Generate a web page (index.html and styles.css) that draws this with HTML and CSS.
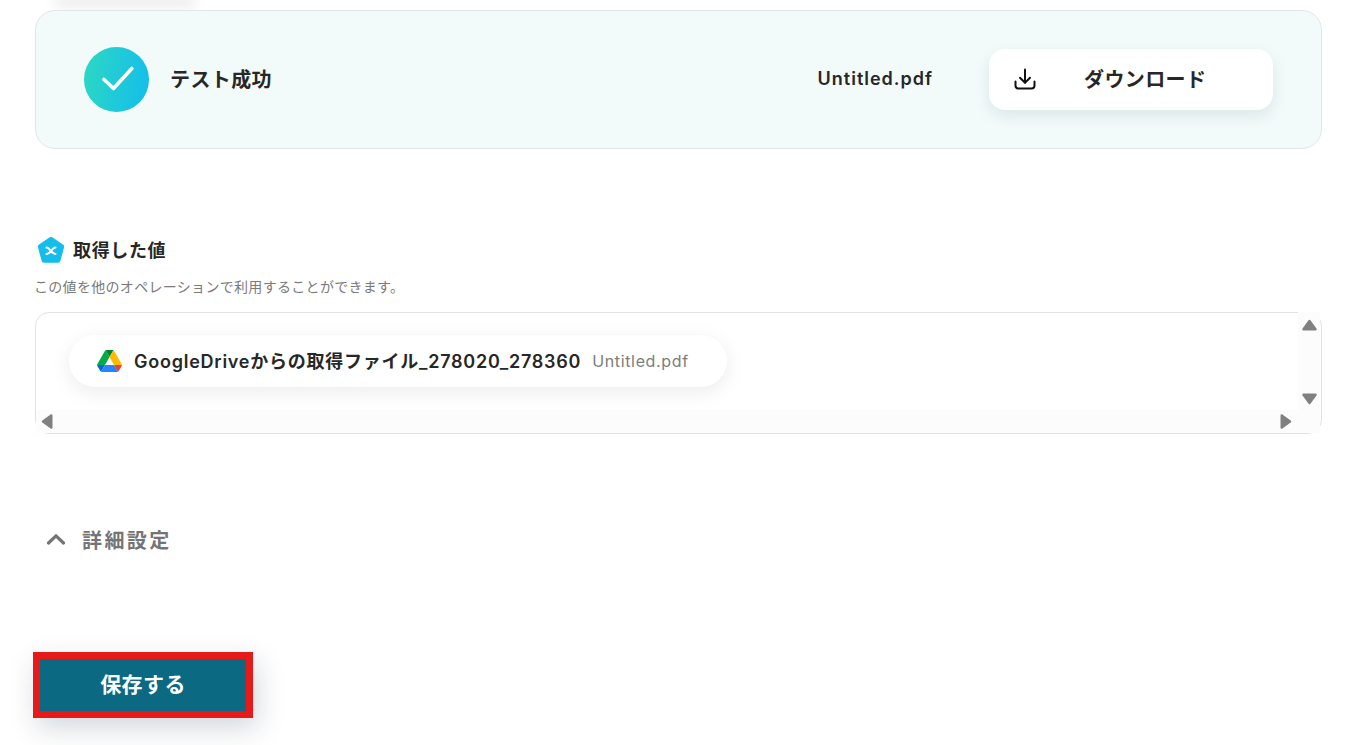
FILE: index.html
```html
<!DOCTYPE html>
<html lang="ja">
<head>
<meta charset="utf-8">
<title>テスト成功</title>
<link rel="stylesheet" href="styles.css">
</head>
<body>
<main class="page">
  <div class="stub"></div>
  <section class="result">
    <div class="check">
      <svg class="check-mark" width="32" height="26" viewBox="0 0 32 26" fill="none"><path d="M2 13.5 L11.5 22.5 L29.8 2.5" stroke="#fff" stroke-width="3.6" stroke-linecap="round" stroke-linejoin="round"/></svg>
    </div>
    <div class="result-title">テスト成功</div>
    <div class="file-name">Untitled.pdf</div>
    <button class="download">
      <svg class="dl-icon" width="24" height="24" viewBox="0 0 24 24" fill="none" stroke="#111" stroke-width="2" stroke-linecap="round" stroke-linejoin="round"><path d="M2.5 14.5v4a3 3 0 0 0 3 3h13a3 3 0 0 0 3-3v-4"/><path d="M12 2.5V15.5"/><path d="M7 10.8l5 5 5-5"/></svg>
      <span class="dl-label">ダウンロード</span>
    </button>
  </section>

  <h2 class="values-head">
    <svg class="pentagon" width="28" height="28" viewBox="0 0 28 28"><path d="M14 3 L25 10.500 L21.200 24.500 H6.800 L3 10.500 Z" fill="#14bdeb" stroke="#14bdeb" stroke-width="4.4" stroke-linejoin="round"/><path d="M9.500 11.500c3.500 0 5 6.500 9 6.500M9.500 18c4 0 5.500-6.500 9-6.500" stroke="#fff" stroke-width="2" stroke-linecap="round" fill="none"/></svg>
    <span>取得した値</span>
  </h2>
  <p class="values-note">この値を他のオペレーションで利用することができます。</p>

  <div class="values-box">
    <div class="pill">
      <svg class="drive" width="25" height="22" viewBox="0 0 87.3 78">
        <path d="m6.6 66.85 3.85 6.65c.8 1.4 1.95 2.5 3.3 3.3l13.75-23.8h-27.5c0 1.55.4 3.1 1.2 4.5z" fill="#0066da"/>
        <path d="m43.65 25-13.75-23.8c-1.35.8-2.5 1.9-3.3 3.3l-25.4 44a9.06 9.06 0 0 0 -1.2 4.5h27.5z" fill="#00ac47"/>
        <path d="m73.55 76.8c1.35-.8 2.5-1.9 3.3-3.3l1.6-2.75 7.65-13.25c.8-1.4 1.2-2.95 1.2-4.5h-27.502l5.852 11.5z" fill="#ea4335"/>
        <path d="m43.65 25 13.75-23.8c-1.35-.8-2.9-1.2-4.5-1.2h-18.5c-1.6 0-3.15.45-4.5 1.2z" fill="#00832d"/>
        <path d="m59.8 53h-32.3l-13.75 23.8c1.35.8 2.9 1.2 4.5 1.2h50.8c1.6 0 3.15-.45 4.5-1.2z" fill="#2684fc"/>
        <path d="m73.4 26.5-12.7-22c-.8-1.4-1.95-2.5-3.3-3.3l-13.75 23.8 16.15 28h27.45c0-1.55-.4-3.1-1.2-4.5z" fill="#ffba00"/>
      </svg>
      <span class="pill-name">GoogleDriveからの取得ファイル_278020_278360</span>
      <span class="pill-value">Untitled.pdf</span>
    </div>
    <div class="bar-right">
      <svg class="arrow arrow-up" width="15" height="12" viewBox="0 0 15 12"><path d="M7.5 2 L13.500 10.300 H1.500 Z" fill="#808080" stroke="#808080" stroke-width="2.400" stroke-linejoin="round"/></svg>
      <svg class="arrow arrow-down" width="15" height="12" viewBox="0 0 15 12"><path d="M7.500 10 L13.500 1.700 H1.500 Z" fill="#808080" stroke="#808080" stroke-width="2.400" stroke-linejoin="round"/></svg>
    </div>
    <div class="bar-bottom">
      <svg class="arrow arrow-left" width="12" height="15" viewBox="0 0 12 15"><path d="M2 7.500 L10.300 13.500 V1.500 Z" fill="#808080" stroke="#808080" stroke-width="2.400" stroke-linejoin="round"/></svg>
      <svg class="arrow arrow-right" width="12" height="15" viewBox="0 0 12 15"><path d="M10 7.500 L1.700 13.500 V1.500 Z" fill="#808080" stroke="#808080" stroke-width="2.400" stroke-linejoin="round"/></svg>
    </div>
  </div>

  <div class="details">
    <svg class="chevron" width="20" height="12" viewBox="0 0 20 12" fill="none"><path d="M2.500 10 L10 2.800 L17.500 10" stroke="#757575" stroke-width="3.200" stroke-linecap="round" stroke-linejoin="round"/></svg>
    <span>詳細設定</span>
  </div>

  <button class="save">保存する</button>
</main>
</body>
</html>
```

FILE: styles.css
```css
* { box-sizing: border-box; }

html, body {
  margin: 0;
  height: 745px;
  overflow: hidden;
  background: #fff;
}

body {
  font-family: Inter, "Noto Sans CJK JP", "Noto Sans", sans-serif;
  color: #272727;
}

.page {
  padding-left: 35px;
  width: 1322px;
}

.stub {
  height: 1px;
  width: 130px;
  margin: -1px 0 0 25px;
  box-shadow: 0 2px 14px 5px rgba(0, 0, 0, 0.09);
}

.result {
  margin-top: 10px;
  height: 139px;
  display: flex;
  align-items: center;
  padding: 0 48px;
  background: #f2fafa;
  border: 1px solid #e2e6e8;
  border-radius: 20px;
  position: relative;
}

.check {
  width: 65px;
  height: 65px;
  margin-top: -1px;
  border-radius: 50%;
  background: linear-gradient(100deg, #2dd8c3, #13bdec);
  display: flex;
  align-items: center;
  justify-content: center;
  flex: none;
}

.check-mark { margin: 0 0 0 2px; }

.result-title {
  margin: -3px 0 0 21px;
  font-size: 20px;
  font-weight: 600;
  letter-spacing: 0.02em;
  flex: 1;
}

.file-name {
  margin: -3px 56px 0 0;
  font-size: 18px;
  font-weight: 600;
  letter-spacing: 0.055em;
}

.download {
  width: 284px;
  height: 61px;
  margin: -1px 0 0 0;
  padding: 0 24px;
  display: flex;
  align-items: center;
  border: 0;
  border-radius: 16px;
  background: #fff;
  box-shadow: 0 6px 16px rgba(0, 40, 50, 0.09);
  font: inherit;
  color: inherit;
}

.dl-icon { flex: none; }

.dl-label {
  margin: -2px 0 0 47px;
  font-size: 20px;
  font-weight: 600;
  letter-spacing: 0.02em;
}

.values-head {
  margin: 86px 0 0 2px;
  height: 28px;
  display: flex;
  align-items: center;
  gap: 8px;
  font-size: 18px;
  font-weight: 600;
  letter-spacing: 0.035em;
  color: #272727;
}

.pentagon {
  flex: none;
  margin-top: 2px;
}

.values-note {
  margin: 13px 0 0 -1px;
  height: 22px;
  font-size: 14px;
  line-height: 22px;
  letter-spacing: 0.022em;
  color: #7a7a7a;
}

.values-box {
  margin-top: 14px;
  height: 122px;
  position: relative;
  border: 1px solid #e3e3e3;
  border-radius: 14px;
  padding: 22px 0 0 33px;
}

.pill {
  width: 658px;
  height: 52px;
  display: flex;
  align-items: center;
  padding-left: 28px;
  border-radius: 26px;
  background: #fff;
  box-shadow: 0 5px 20px rgba(0, 0, 0, 0.08);
}

.drive { flex: none; }

.pill-name {
  margin: -2px 0 0 12px;
  font-size: 18px;
  font-weight: 600;
  letter-spacing: 0.042em;
  white-space: nowrap;
}

.pill-value {
  margin-left: 11px;
  font-size: 16px;
  color: #7d7d7d;
  letter-spacing: 0.04em;
  white-space: nowrap;
}

.bar-right {
  position: absolute;
  top: -1px;
  right: 1px;
  width: 22px;
  bottom: 0;
  background: #fcfcfc;
}

.bar-bottom {
  position: absolute;
  left: 0;
  right: 1px;
  bottom: 0;
  height: 23px;
  background: #fcfcfc;
}

.arrow {
  position: absolute;
}

.arrow-up {
  top: 7px;
  left: 4px;
}

.arrow-down {
  top: 81px;
  left: 4px;
}

.arrow-left {
  top: 4px;
  left: 5px;
}

.arrow-right {
  top: 4px;
  right: 28px;
}

.details {
  margin: 91px 0 0 11px;
  height: 28px;
  display: flex;
  align-items: center;
  gap: 16px;
  font-size: 20px;
  font-weight: 600;
  letter-spacing: 0.12em;
  color: #757575;
}

.chevron { flex: none; }

.save {
  display: block;
  margin: 99px 0 0 -2px;
  width: 220px;
  height: 66px;
  padding: 0 0 4px;
  border: 7px solid #e71a1a;
  background: #0b6982;
  color: #fff;
  font: inherit;
  font-size: 21px;
  font-weight: 600;
  letter-spacing: 0.02em;
  box-shadow: 4px 10px 28px rgba(0, 40, 60, 0.18);
}
```
